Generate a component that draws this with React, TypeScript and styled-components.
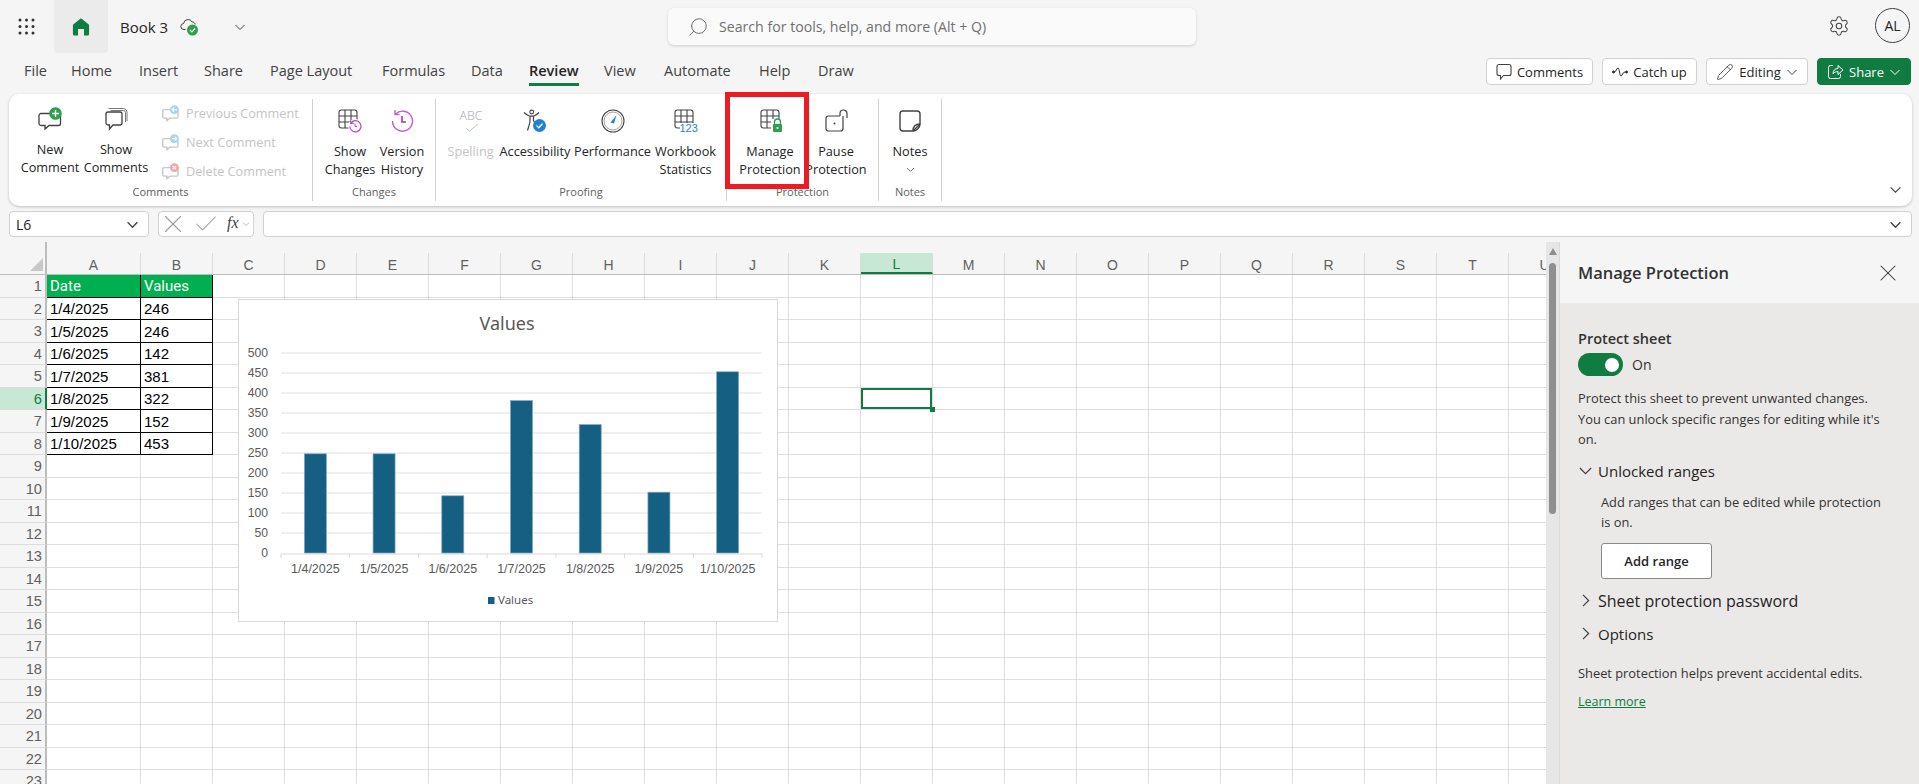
import React from "react";
import styled, { createGlobalStyle } from "styled-components";
import { Settings, Search, Pencil, X, Check } from "lucide-react";

const UI_FONT = `"Open Sans", "Noto Sans", sans-serif`;
const SHEET_FONT = `"Liberation Sans", Arial, sans-serif`;
const GREEN = "#107c41";
const INK = "#424242";

const GlobalStyle = createGlobalStyle`
  html, body {
    margin: 0;
    padding: 0;
    background: #f5f5f5;
    overflow: hidden;
  }
  * { box-sizing: border-box; }
`;

const Page = styled.div`
  width: 1919px;
  height: 784px;
  overflow: hidden;
  display: flex;
  flex-direction: column;
  background: #f5f5f5;
  font-family: ${UI_FONT};
  color: #242424;
  position: relative;
`;

const RedMarker = styled.div`
  position: absolute;
  left: 725px;
  top: 92px;
  width: 84px;
  height: 97px;
  border: 5px solid #ed1c24;
  z-index: 5;
  pointer-events: none;
`;

/* ---------- title bar ---------- */

const TitleBar = styled.div`
  height: 53px;
  flex: none;
  display: flex;
  align-items: flex-start;
`;

const TitleLeft = styled.div`
  width: 668px;
  height: 53px;
  flex: none;
  display: flex;
  align-items: center;
  padding-left: 18px;
`;

const HomeTab = styled.div`
  width: 54px;
  height: 53px;
  margin-left: 19px;
  margin-right: 12px;
  background: #ebebeb;
  border-radius: 0 0 4px 4px;
  display: flex;
  align-items: center;
  justify-content: center;
`;

const BookName = styled.span`
  font-size: 15px;
  width: 60px;
  color: #242424;
`;

const BookChevron = styled.span`
  display: flex;
  margin-left: 35px;
`;

const SearchBox = styled.div`
  width: 528px;
  height: 37px;
  margin-top: 8px;
  flex: none;
  background: #fafafa;
  border-radius: 6px;
  box-shadow: 0 1px 3px rgba(0, 0, 0, 0.16);
  display: flex;
  align-items: center;
  padding-left: 19px;
  gap: 10px;
  font-size: 14.15px;
  color: #707070;

  svg {
    transform: scaleX(-1);
  }
`;

const TitleRight = styled.div`
  margin-left: auto;
  height: 53px;
  display: flex;
  align-items: center;
  padding: 0 9px 0 0;
  gap: 25px;
  margin-top: -1px;
`;

const Avatar = styled.div`
  width: 35px;
  height: 35px;
  border-radius: 50%;
  border: 1px solid #424242;
  display: flex;
  align-items: center;
  justify-content: center;
  font-size: 14px;
`;

/* ---------- tab row ---------- */

const TabBar = styled.div`
  height: 41px;
  flex: none;
  display: flex;
  align-items: flex-start;
  padding-left: 24px;
  padding-right: 8px;
`;

const Tab = styled.div<{ $width: number; $active?: boolean }>`
  width: ${({ $width }) => $width}px;
  flex: none;
  height: 33px;
  padding-top: 7px;
  font-size: 14.5px;
  line-height: 21px;
  font-weight: ${({ $active }) => ($active ? 600 : 400)};
  color: ${({ $active }) => ($active ? "#242424" : INK)};
`;

const TabLabel = styled.span<{ $active?: boolean }>`
  display: inline-block;
  height: 26px;
  border-bottom: ${({ $active }) => ($active ? `3px solid ${GREEN}` : "none")};
`;

const Actions = styled.div`
  margin-left: auto;
  margin-top: 5px;
  display: flex;
  gap: 9px;
`;

const ActionButton = styled.div<{ $width: number; $primary?: boolean }>`
  width: ${({ $width }) => $width}px;
  height: 27px;
  border-radius: 4px;
  display: flex;
  align-items: center;
  justify-content: center;
  gap: 5px;
  font-size: 13px;
  background: ${({ $primary }) => ($primary ? GREEN : "#fff")};
  color: ${({ $primary }) => ($primary ? "#fff" : "#242424")};
  border: 1px solid ${({ $primary }) => ($primary ? GREEN : "#d1d1d1")};
`;

/* ---------- ribbon ---------- */

const Ribbon = styled.div`
  height: 112px;
  flex: none;
  margin: 0 7px 0 9px;
  background: #fff;
  border-radius: 10px;
  box-shadow: 0 1px 3px rgba(0, 0, 0, 0.22);
  display: flex;
  align-items: center;
  position: relative;
`;

const Group = styled.div<{ $width: number; $top?: number; $pad?: number }>`
  width: ${({ $width }) => $width}px;
  height: 102px;
  flex: none;
  display: flex;
  flex-direction: column;
  border-right: 1px solid #d1d1d1;
  padding-top: ${({ $top }) => $top ?? 10}px;
  padding-left: ${({ $pad }) => $pad ?? 0}px;
  position: relative;
`;

const GroupItems = styled.div`
  display: flex;
  flex: 1;
  align-items: flex-start;
`;

const GroupLabel = styled.div`
  position: absolute;
  left: 0;
  right: 0;
  bottom: 2px;
  text-align: center;
  font-size: 11px;
  line-height: 15px;
  color: #616161;
`;

const Command = styled.div<{ $width: number; $disabled?: boolean }>`
  width: ${({ $width }) => $width}px;
  flex: none;
  display: flex;
  flex-direction: column;
  align-items: center;
  text-align: center;
  font-size: 12.7px;
  line-height: 18px;
  color: ${({ $disabled }) => ($disabled ? "#c4c4c4" : "#242424")};
  white-space: pre;

  & > svg:first-child {
    margin-bottom: 9px;
    flex: none;
  }
`;

const CommandChevron = styled.span`
  display: flex;
  margin-top: 5px;
`;

const StackedCommands = styled.div`
  display: flex;
  flex-direction: column;
  margin-left: 13px;
  margin-top: -3px;
  gap: 11px;
`;

const SmallCommand = styled.div`
  display: flex;
  align-items: center;
  gap: 7px;
  height: 18px;
  font-size: 12.7px;
  color: #c4c4c4;
`;

const RibbonCollapse = styled.div`
  position: absolute;
  right: 10px;
  bottom: 10px;
  display: flex;
`;

/* ---------- formula bar ---------- */

const FormulaBar = styled.div`
  height: 26px;
  flex: none;
  margin: 5px 7px 5px 9px;
  display: flex;
  gap: 9px;
`;

const FieldBox = styled.div<{ $width?: number; $tight?: boolean }>`
  width: ${({ $width }) => ($width ? `${$width}px` : "auto")};
  flex: ${({ $width }) => ($width ? "none" : "1")};
  height: 26px;
  background: #fff;
  border: 1px solid #d1d1d1;
  border-radius: 4px;
  display: flex;
  align-items: center;
  font-size: 14px;
  padding: ${({ $tight }) => ($tight ? "0 3px 0 0" : "0 9px 0 6px")};
  justify-content: space-between;
  overflow: hidden;
`;

const FormulaIcons = styled.div`
  display: flex;
  align-items: center;
  gap: 4px;
  color: #9e9e9e;
  margin-left: -1px;
`;

const FxLabel = styled.span`
  font-family: "Liberation Serif", serif;
  font-style: italic;
  font-size: 16px;
  color: #424242;
  margin-left: 3px;
  padding-bottom: 2px;
`;

/* ---------- sheet ---------- */

const Workspace = styled.div`
  flex: 1;
  min-height: 0;
  display: flex;
`;

const Sheet = styled.div`
  width: 1546px;
  flex: none;
  overflow: hidden;
  position: relative;
  background: #fff;
`;

const ColumnHeader = styled.div`
  height: 33px;
  display: flex;
  background: #f5f5f5;
  border-bottom: 1px solid #bdbdbd;
`;

const Corner = styled.div`
  width: 47px;
  flex: none;
  position: relative;
  border-right: 2px solid #bdbdbd;

  &::after {
    content: "";
    position: absolute;
    right: 2px;
    bottom: 3px;
    width: 0;
    height: 0;
    border-left: 13px solid transparent;
    border-bottom: 13px solid #c8c8c8;
  }
`;

const ColumnCell = styled.div<{ $width: number; $selected?: boolean }>`
  width: ${({ $width }) => $width}px;
  flex: none;
  height: 21px;
  align-self: flex-end;
  display: flex;
  align-items: center;
  justify-content: center;
  padding-top: 2px;
  font-family: ${SHEET_FONT};
  font-size: 14px;
  color: ${({ $selected }) => ($selected ? GREEN : "#616161")};
  background: ${({ $selected }) => ($selected ? "#c9e7d5" : "transparent")};
  border-right: 1px solid #dcdcdc;
  border-bottom: ${({ $selected }) => ($selected ? `2px solid ${GREEN}` : "none")};
`;

const Row = styled.div`
  height: 22.5px;
  display: flex;
`;

const RowHeader = styled.div<{ $selected?: boolean }>`
  width: 47px;
  flex: none;
  display: flex;
  align-items: center;
  justify-content: flex-end;
  padding: 1px 3px 0 0;
  font-family: ${SHEET_FONT};
  font-size: 14.67px;
  color: ${({ $selected }) => ($selected ? GREEN : "#616161")};
  background: ${({ $selected }) => ($selected ? "#c9e7d5" : "#f5f5f5")};
  border-right: 2px solid ${({ $selected }) => ($selected ? GREEN : "#bdbdbd")};
  border-bottom: 1px solid #dcdcdc;
`;

const Cell = styled.div<{
  $width: number;
  $tone?: "head" | "data";
  $active?: boolean;
}>`
  width: ${({ $width }) => $width}px;
  flex: none;
  position: relative;
  display: flex;
  align-items: center;
  padding: 1px 0 0 3px;
  white-space: nowrap;
  font-family: ${({ $tone }) => ($tone === "head" ? `Roboto, sans-serif` : SHEET_FONT)};
  font-size: 15px;
  color: ${({ $tone }) => ($tone === "head" ? "#fff" : "#000")};
  background: ${({ $tone }) => ($tone === "head" ? "#00b050" : "#fff")};
  border-right: 1px solid ${({ $tone }) => ($tone ? "#000" : "#dedede")};
  border-bottom: 1px solid ${({ $tone }) => ($tone ? "#000" : "#dedede")};

  ${({ $active }) =>
    $active &&
    `
    box-shadow: inset 0 0 0 2px ${GREEN};
    z-index: 2;
    &::after {
      content: "";
      position: absolute;
      right: -3px;
      bottom: -3px;
      width: 5px;
      height: 5px;
      background: ${GREEN};
    }
  `}
`;

const ChartCard = styled.div`
  position: absolute;
  left: 238px;
  top: 57px;
  width: 540px;
  height: 323px;
  background: #fff;
  border: 1px solid #d9d9d9;
  z-index: 1;
`;

const ScrollTrack = styled.div`
  width: 14px;
  flex: none;
  background: #e6e6e6;
  border-right: 1px solid #dadada;
  display: flex;
  flex-direction: column;
  align-items: center;
  padding-top: 6px;
`;

const ScrollArrow = styled.div`
  width: 0;
  height: 0;
  border-left: 4.5px solid transparent;
  border-right: 4.5px solid transparent;
  border-bottom: 7px solid #8f8f8f;
`;

const ScrollThumb = styled.div`
  width: 7px;
  height: 251px;
  margin-top: 8px;
  border-radius: 4px;
  background: #8f8f8f;
`;

/* ---------- task pane ---------- */

const Pane = styled.div`
  flex: 1;
  display: flex;
  flex-direction: column;
  background: #ebe9e8;
`;

const PaneHeader = styled.div`
  height: 61px;
  flex: none;
  background: #f5f5f5;
  display: flex;
  align-items: center;
  justify-content: space-between;
  padding: 0 17px 0 18px;
  font-size: 16.5px;
  font-weight: 600;
  color: #333;
`;

const PaneBody = styled.div`
  padding: 26px 18px 0;
  display: flex;
  flex-direction: column;
  font-size: 12.85px;
  color: #333;
`;

const PaneTitle = styled.div`
  font-weight: 600;
  font-size: 14.5px;
  line-height: 20px;
`;

const ToggleRow = styled.div`
  display: flex;
  align-items: center;
  gap: 9px;
  margin-top: 4px;
  height: 23px;
  font-size: 14px;
`;

const ToggleTrack = styled.div`
  width: 45px;
  height: 23px;
  border-radius: 12px;
  background: ${GREEN};
  display: flex;
  align-items: center;
  justify-content: flex-end;
  padding-right: 4px;
`;

const ToggleKnob = styled.div`
  width: 14px;
  height: 14px;
  border-radius: 50%;
  background: #fff;
`;

const PaneText = styled.div<{ $indent?: boolean; $gap?: number }>`
  line-height: 20.6px;
  padding-left: ${({ $indent }) => ($indent ? 23 : 0)}px;
  margin-top: ${({ $gap }) => $gap ?? 12}px;
`;

const Disclosure = styled.div<{ $gap?: number; $size?: number }>`
  display: flex;
  align-items: center;
  height: 22px;
  gap: 5px;
  font-size: ${({ $size }) => $size ?? 15}px;
  margin-top: ${({ $gap }) => $gap ?? 11}px;
  color: #242424;
`;

const PaneButton = styled.div`
  width: 111px;
  height: 36px;
  margin: 10px 0 0 23px;
  background: #fff;
  border: 1px solid #8a8a8a;
  border-radius: 3px;
  display: flex;
  align-items: center;
  justify-content: center;
  font-size: 13px;
  font-weight: 600;
  color: #242424;
`;

const LearnMore = styled.a`
  margin-top: 8px;
  color: ${GREEN};
  text-decoration: underline;
  font-size: 12.5px;
  line-height: 20px;
`;

/* ---------- icons ---------- */

const Chevron: React.FC<{ size?: number; color?: string; dir?: "down" | "right"; width?: number }> = ({
  size = 12,
  color = "#424242",
  dir = "down",
  width = 1,
}) => (
  <svg width={size} height={size} viewBox="0 0 12 12" fill="none" stroke={color} strokeWidth={width}>
    {dir === "down" ? <path d="M1.5 4l4.5 4.5L10.5 4" /> : <path d="M4 1.5L8.5 6 4 10.5" />}
  </svg>
);

const Waffle = () => (
  <svg width="17" height="17" viewBox="0 0 17 17" fill="#333">
    {[2, 8.5, 15].map((y) =>
      [2, 8.5, 15].map((x) => <circle key={`${x}-${y}`} cx={x} cy={y} r="1.5" />)
    )}
  </svg>
);

const HomeIcon = () => (
  <svg width="18" height="18" viewBox="0 0 18 18" fill={GREEN}>
    <path d="M9 .5a1.6 1.6 0 0 1 1 .4l6.5 5.4c.4.3.6.8.6 1.3V16a1.5 1.5 0 0 1-1.5 1.5H12V11H6v6.500H2.400A1.500 1.500 0 0 1 .9 16V7.600c0-.5.2-1 .6-1.300L8 .9c.3-.3.6-.4 1-.4z" />
  </svg>
);

const CloudCheck = () => (
  <svg width="19" height="18" viewBox="0 0 19 18" fill="none">
    <path
      d="M5.500 11.500H4A3 3 0 0 1 3.600 5.500 4.500 4.500 0 0 1 12 3.800c2 .2 3 1.500 3.200 2.700"
      stroke="#424242"
      strokeWidth="1"
    />
    <circle cx="12.500" cy="12" r="5.500" fill="#2e9e4f" />
    <path d="M10 12l1.900 1.900 3.200-3.400" stroke="#fff" strokeWidth="1.200" />
  </svg>
);

const Bubble: React.FC<{ badge?: string; mark?: React.ReactNode; stack?: boolean; dim?: boolean; size?: number }> = ({
  badge,
  mark,
  stack,
  dim,
  size = 24,
}) => (
  <svg width={size} height={size} viewBox="0 0 24 24" fill="none">
    {stack && (
      <path d="M6.500 3.500h13a2 2 0 0 1 2 2v9.500M4.500 1.500h15a4 4 0 0 1 3.500 3.500v9" stroke="#7a7a7a" strokeWidth="1" />
    )}
    <path
      d={
        stack
          ? "M4 5h12a2 2 0 0 1 2 2v9a2 2 0 0 1-2 2H9l-3.500 4v-4H4a2 2 0 0 1-2-2V7a2 2 0 0 1 2-2z"
          : "M3 6.500h17.500a2 2 0 0 1 2 2v8a2 2 0 0 1-2 2H11l-4 3.500v-3.500H3a2 2 0 0 1-2-2v-8a2 2 0 0 1 2-2z"
      }
      fill="#fff"
      stroke={dim ? "#c8c8c8" : "#424242"}
      strokeWidth={dim ? 2 : 1.300}
    />
    {badge && <circle cx="17.500" cy="6.500" r="6.300" fill={badge} />}
    {mark}
  </svg>
);

const PlusMark = <path d="M17.500 3v7M14 6.500h7" stroke="#fff" strokeWidth="1.400" />;
const LeftMark = <path d="M21 6.500h-6.500M17 3.800l-2.700 2.700 2.700 2.700" stroke="#fff" strokeWidth="1.500" />;
const RightMark = <path d="M14 6.500h6.500M18 3.800l2.700 2.700-2.700 2.700" stroke="#fff" strokeWidth="1.500" />;
const CrossMark = <path d="M15 4l5 5M20 4l-5 5" stroke="#fff" strokeWidth="1.500" />;

const GridGlyph = () => (
  <g fill="none" stroke="#424242" strokeWidth="1.100">
    <rect x="1" y="1" width="18" height="18" rx="2.500" />
    <path d="M1 7h18M1 13h18M7 1v18M13 1v18" />
  </g>
);

const ShowChangesIcon = () => (
  <svg width="24" height="24" viewBox="0 0 24 24" fill="none">
    <GridGlyph />
    <circle cx="17" cy="17" r="7" fill="#fff" />
    <path
      d="M13 13.800a5.600 5.600 0 1 1-1.200 3.600M12.500 11.500l.3 3 3-.3"
      stroke="#b146c2"
      strokeWidth="1.200"
    />
    <path d="M17 14.500V17.500h2" stroke="#b146c2" strokeWidth="1" />
  </svg>
);

const VersionHistoryIcon = () => (
  <svg width="24" height="24" viewBox="0 0 24 24" fill="none" stroke="#c25ccf" strokeWidth="1.400">
    <path d="M5.500 5A10 10 0 1 1 2.500 12" />
    <path d="M5 1v4.500h4.500" />
    <path d="M12 7v6h4" strokeWidth="1.600" stroke="#a03cb0" />
  </svg>
);

const SpellingIcon = () => (
  <svg width="26" height="24" viewBox="0 0 26 24" fill="none">
    <text
      x="1.500"
      y="11"
      fontFamily={UI_FONT}
      fontWeight="300"
      fontSize="13"
      textLength="23"
      lengthAdjust="spacingAndGlyphs"
      fill="#a8a8a8"
    >
      ABC
    </text>
    <path d="M8 19l3.500 3L20 15" stroke="#a6dab8" strokeWidth="1" />
  </svg>
);

const AccessibilityIcon = () => (
  <svg width="24" height="24" viewBox="0 0 24 24" fill="none">
    <path
      d="M1 3.500c2 2 4 3 6 3.700h3.500c2-.7 3.500-1.700 5.500-3.700M7 7.200v4c0 3-1 5.500-2.500 10.300M10.500 7.200v4.300l1.500 2.500"
      stroke="#424242"
      strokeWidth="1.200"
    />
    <circle cx="8.700" cy="3" r="1.900" stroke="#424242" strokeWidth="1.100" />
    <circle cx="16.500" cy="16.500" r="6.500" fill="#1f84d0" />
    <path d="M13.500 16.500l2.200 2.200 3.800-4" stroke="#fff" strokeWidth="1.300" />
  </svg>
);

const PerformanceIcon = () => (
  <svg width="24" height="24" viewBox="0 0 24 24" fill="none">
    <circle cx="12" cy="12" r="11" stroke="#424242" strokeWidth="1.100" />
    <circle cx="12" cy="12" r="9" stroke="#8a8a8a" strokeWidth="0.800" />
    <path d="M9.500 13.500l6-7.500-2.500 8.500z" fill="#1f84d0" />
  </svg>
);

const StatsIcon = () => (
  <svg width="24" height="24" viewBox="0 0 24 24" fill="none">
    <GridGlyph />
    <rect x="6" y="14" width="18" height="10" fill="#fff" />
    <text x="5.500" y="22.500" fontFamily={SHEET_FONT} fontSize="11" fill="#1f84d0">
      123
    </text>
  </svg>
);

const ManageProtectionIcon = () => (
  <svg width="24" height="24" viewBox="-2 0 24 24" overflow="visible" fill="none">
    <GridGlyph />
    <rect x="11" y="10" width="13" height="14" fill="#fff" />
    <path d="M14.500 15v-2a3 3 0 0 1 6 0v2" stroke="#2e9e4f" strokeWidth="1.300" />
    <rect x="13" y="15" width="9" height="8" rx="1" fill="#2e9e4f" />
    <circle cx="17.500" cy="19" r="1.100" fill="#fff" />
  </svg>
);

const PauseProtectionIcon = () => (
  <svg width="24" height="24" viewBox="-1 0 24 24" overflow="visible" fill="none" stroke="#424242" strokeWidth="1.200">
    <path d="M15 7H3.500a2.500 2.500 0 0 0-2.500 2.500v10A2.500 2.500 0 0 0 3.500 22h12a2.500 2.500 0 0 0 2.500-2.500V7" />
    <path d="M15 7V4.500a3.500 3.500 0 0 1 7 0V9" />
    <circle cx="9.500" cy="14.500" r="1" fill="#424242" stroke="none" />
  </svg>
);

const NotesIcon = () => (
  <svg width="24" height="24" viewBox="0 0 24 24" fill="none" stroke="#424242" strokeWidth="1.400">
    <path d="M22 15V5a3 3 0 0 0-3-3H5a3 3 0 0 0-3 3v14a3 3 0 0 0 3 3h10z" />
    <path d="M15 22c0-4 2-7 7-7" />
    <path d="M15 22c3 0 7-3 7-7" />
  </svg>
);

const CommentOutline = () => (
  <svg width="16" height="17" viewBox="0 0 16 17" fill="none" stroke="#424242" strokeWidth="1.100">
    <path d="M3 1.500h10A2 2 0 0 1 15 3.500v7a2 2 0 0 1-2 2H7.500L4.500 16v-3.500H3a2 2 0 0 1-2-2v-7a2 2 0 0 1 2-2z" />
  </svg>
);

const CatchUpIcon = () => (
  <svg width="16" height="12" viewBox="0 0 16 12" fill="none" stroke="#242424" strokeWidth="1">
    <circle cx="1.500" cy="6" r="1" fill="#242424" />
    <circle cx="14.500" cy="6" r="1" fill="#242424" />
    <path d="M2.500 6C4 6 4.500 2 6 2s1.500 8 3 8 1.500-4 4-4" />
  </svg>
);

const ShareIcon = () => (
  <svg width="17" height="17" viewBox="0 0 17 17" fill="none" stroke="#fff" strokeWidth="1">
    <path d="M6 2.500H3.500a2 2 0 0 0-2 2v9a2 2 0 0 0 2 2h8a2 2 0 0 0 2-2V11" />
    <path d="M6 11c0-3.500 2-5.500 5-5.500V2.500l5 4.500-5 4.500V8.500c-2 0-3.500.7-5 2.500z" />
  </svg>
);

/* ---------- chart ---------- */

const chartData = [
  { label: "1/4/2025", value: 248 },
  { label: "1/5/2025", value: 248 },
  { label: "1/6/2025", value: 143 },
  { label: "1/7/2025", value: 381 },
  { label: "1/8/2025", value: 321 },
  { label: "1/9/2025", value: 152 },
  { label: "1/10/2025", value: 453 },
];

const ValuesChart = () => {
  const plotLeft = 42;
  const plotRight = 523;
  const plotTop = 53;
  const plotBottom = 253;
  const step = (plotRight - plotLeft) / chartData.length;
  const ticks = [0, 50, 100, 150, 200, 250, 300, 350, 400, 450, 500];
  const grey = "#595959";

  return (
    <svg width="538" height="321" viewBox="0 0 538 321" fontFamily={SHEET_FONT}>
      <text x="268" y="30" textAnchor="middle" fontFamily={`"Noto Sans", sans-serif`} fontSize="18" fill={grey}>
        Values
      </text>
      {ticks.map((t) => {
        const y = plotBottom - (t / 500) * (plotBottom - plotTop);
        return (
          <g key={t}>
            {t > 0 && <line x1={plotLeft} x2={plotRight} y1={y} y2={y} stroke="#e1e1e1" strokeWidth="1" />}
            <text x="29" y={y + 4} textAnchor="end" fontSize="12.200" fill={grey}>
              {t}
            </text>
          </g>
        );
      })}
      <line x1={plotLeft} x2={plotRight} y1={plotBottom + 1} y2={plotBottom + 1} stroke="#d9d9d9" />
      {chartData.map((d, i) => {
        const cx = plotLeft + step * (i + 0.5);
        const h = (d.value / 500) * (plotBottom - plotTop);
        return (
          <g key={d.label}>
            <rect x={cx - 11} y={plotBottom - h} width="22" height={h} fill="#156082" stroke="#7fa9bd" strokeWidth="0.700" />
            <text x={cx} y={plotBottom + 20} textAnchor="middle" fontSize="12.500" fill={grey}>
              {d.label}
            </text>
            <line x1={plotLeft + step * i} x2={plotLeft + step * i} y1={plotBottom + 1} y2={plotBottom + 5} stroke="#d9d9d9" />
          </g>
        );
      })}
      <line x1={plotRight} x2={plotRight} y1={plotBottom + 1} y2={plotBottom + 5} stroke="#d9d9d9" />
      <rect x="249" y="297" width="6.500" height="7" fill="#156082" />
      <text x="259" y="304" fontFamily={`"Noto Sans", sans-serif`} fontSize="11.500" fill={grey}>
        Values
      </text>
    </svg>
  );
};

/* ---------- data ---------- */

const tabs = [
  { label: "File", width: 47 },
  { label: "Home", width: 68 },
  { label: "Insert", width: 65 },
  { label: "Share", width: 66 },
  { label: "Page Layout", width: 112 },
  { label: "Formulas", width: 89 },
  { label: "Data", width: 58 },
  { label: "Review", width: 75, active: true },
  { label: "View", width: 60 },
  { label: "Automate", width: 95 },
  { label: "Help", width: 59 },
  { label: "Draw", width: 50 },
];

const columns = ["A", "B", "C", "D", "E", "F", "G", "H", "I", "J", "K", "L", "M", "N", "O", "P", "Q", "R", "S", "T", "U"];
const columnWidth = (c: string) => (c === "A" ? 94 : 72);

const tableRows: Record<number, [string, string]> = {
  1: ["Date", "Values"],
  2: ["1/4/2025", "246"],
  3: ["1/5/2025", "246"],
  4: ["1/6/2025", "142"],
  5: ["1/7/2025", "381"],
  6: ["1/8/2025", "322"],
  7: ["1/9/2025", "152"],
  8: ["1/10/2025", "453"],
};

const rowNumbers = Array.from({ length: 23 }, (_, i) => i + 1);

const App: React.FC = () => {
  return (
    <Page>
      <GlobalStyle />

      <TitleBar>
        <TitleLeft>
          <Waffle />
          <HomeTab>
            <HomeIcon />
          </HomeTab>
          <BookName>Book 3</BookName>
          <CloudCheck />
          <BookChevron>
            <Chevron />
          </BookChevron>
        </TitleLeft>
        <SearchBox>
          <Search size={22} strokeWidth={1} color="#616161" />
          <span>Search for tools, help, and more (Alt + Q)</span>
        </SearchBox>
        <TitleRight>
          <Settings size={22} strokeWidth={1.1} color="#424242" />
          <Avatar>AL</Avatar>
        </TitleRight>
      </TitleBar>

      <TabBar>
        {tabs.map((t) => (
          <Tab key={t.label} $width={t.width} $active={t.active}>
            <TabLabel $active={t.active}>{t.label}</TabLabel>
          </Tab>
        ))}
        <Actions>
          <ActionButton $width={107}>
            <CommentOutline />
            Comments
          </ActionButton>
          <ActionButton $width={95}>
            <CatchUpIcon />
            Catch up
          </ActionButton>
          <ActionButton $width={102}>
            <Pencil size={18} strokeWidth={1} />
            Editing
            <Chevron />
          </ActionButton>
          <ActionButton $width={94} $primary>
            <ShareIcon />
            Share
            <Chevron color="#fff" />
          </ActionButton>
        </Actions>
      </TabBar>

      <Ribbon>
        <Group $width={304} $top={8} $pad={8}>
          <GroupItems>
            <Command $width={66}>
              <Bubble badge="#2e9e4f" mark={PlusMark} />
              {"New\nComment"}
            </Command>
            <Command $width={66}>
              <Bubble stack />
              {"Show\nComments"}
            </Command>
            <StackedCommands>
              <SmallCommand>
                <Bubble size={17} dim badge="#a9d3f0" mark={LeftMark} />
                Previous Comment
              </SmallCommand>
              <SmallCommand>
                <Bubble size={17} dim badge="#a9d3f0" mark={RightMark} />
                Next Comment
              </SmallCommand>
              <SmallCommand>
                <Bubble size={17} dim badge="#f0a6a6" mark={CrossMark} />
                Delete Comment
              </SmallCommand>
            </StackedCommands>
          </GroupItems>
          <GroupLabel>Comments</GroupLabel>
        </Group>

        <Group $width={123} $pad={11}>
          <GroupItems>
            <Command $width={52}>
              <ShowChangesIcon />
              {"Show\nChanges"}
            </Command>
            <Command $width={52}>
              <VersionHistoryIcon />
              {"Version\nHistory"}
            </Command>
          </GroupItems>
          <GroupLabel>Changes</GroupLabel>
        </Group>

        <Group $width={291} $pad={11}>
          <GroupItems>
            <Command $width={47} $disabled>
              <SpellingIcon />
              Spelling
            </Command>
            <Command $width={82}>
              <AccessibilityIcon />
              Accessibility
            </Command>
            <Command $width={73}>
              <PerformanceIcon />
              Performance
            </Command>
            <Command $width={73}>
              <StatsIcon />
              {"Workbook\nStatistics"}
            </Command>
          </GroupItems>
          <GroupLabel>Proofing</GroupLabel>
        </Group>

        <Group $width={152} $pad={10}>
          <GroupItems>
            <Command $width={66}>
              <ManageProtectionIcon />
              {"Manage\nProtection"}
            </Command>
            <Command $width={66}>
              <PauseProtectionIcon />
              {"Pause\nProtection"}
            </Command>
          </GroupItems>
          <GroupLabel>Protection</GroupLabel>
        </Group>

        <Group $width={63} $pad={11}>
          <GroupItems>
            <Command $width={40}>
              <NotesIcon />
              Notes
              <CommandChevron>
                <Chevron size={9} />
              </CommandChevron>
            </Command>
          </GroupItems>
          <GroupLabel>Notes</GroupLabel>
        </Group>

        <RibbonCollapse>
          <Chevron size={13} />
        </RibbonCollapse>
      </Ribbon>

      <FormulaBar>
        <FieldBox $width={140}>
          L6
          <Chevron size={13} width={1.3} />
        </FieldBox>
        <FieldBox $width={96} $tight>
          <FormulaIcons>
            <X size={30} strokeWidth={0.9} />
            <Check size={28} strokeWidth={0.9} />
            <FxLabel>fx</FxLabel>
          </FormulaIcons>
          <Chevron size={8} color="#9e9e9e" />
        </FieldBox>
        <FieldBox>
          <span />
          <Chevron size={13} width={1.3} />
        </FieldBox>
      </FormulaBar>

      <Workspace>
        <Sheet>
          <ColumnHeader>
            <Corner />
            {columns.map((c) => (
              <ColumnCell key={c} $width={columnWidth(c)} $selected={c === "L"}>
                {c}
              </ColumnCell>
            ))}
          </ColumnHeader>
          {rowNumbers.map((n) => {
            const values = tableRows[n];
            return (
              <Row key={n}>
                <RowHeader $selected={n === 6}>{n}</RowHeader>
                {columns.map((c, i) => {
                  const inTable = values && i < 2;
                  return (
                    <Cell
                      key={c}
                      $width={columnWidth(c)}
                      $tone={inTable ? (n === 1 ? "head" : "data") : undefined}
                      $active={c === "L" && n === 6}
                    >
                      {inTable ? values[i] : null}
                    </Cell>
                  );
                })}
              </Row>
            );
          })}
          <ChartCard>
            <ValuesChart />
          </ChartCard>
        </Sheet>

        <ScrollTrack>
          <ScrollArrow />
          <ScrollThumb />
        </ScrollTrack>

        <Pane>
          <PaneHeader>
            Manage Protection
            <X size={28} strokeWidth={0.9} color="#333" />
          </PaneHeader>
          <PaneBody>
            <PaneTitle>Protect sheet</PaneTitle>
            <ToggleRow>
              <ToggleTrack>
                <ToggleKnob />
              </ToggleTrack>
              On
            </ToggleRow>
            <PaneText>
              Protect this sheet to prevent unwanted changes.
              <br />
              You can unlock specific ranges for editing while it's
              <br />
              on.
            </PaneText>
            <Disclosure $gap={10}>
              <Chevron size={15} />
              Unlocked ranges
            </Disclosure>
            <PaneText $indent $gap={10}>
              Add ranges that can be edited while protection
              <br />
              is on.
            </PaneText>
            <PaneButton>Add range</PaneButton>
            <Disclosure $size={16}>
              <Chevron size={15} dir="right" />
              Sheet protection password
            </Disclosure>
            <Disclosure $gap={11}>
              <Chevron size={15} dir="right" />
              Options
            </Disclosure>
            <PaneText $gap={18}>Sheet protection helps prevent accidental edits.</PaneText>
            <LearnMore>Learn more</LearnMore>
          </PaneBody>
        </Pane>
      </Workspace>

      <RedMarker />
    </Page>
  );
};

export default App;
